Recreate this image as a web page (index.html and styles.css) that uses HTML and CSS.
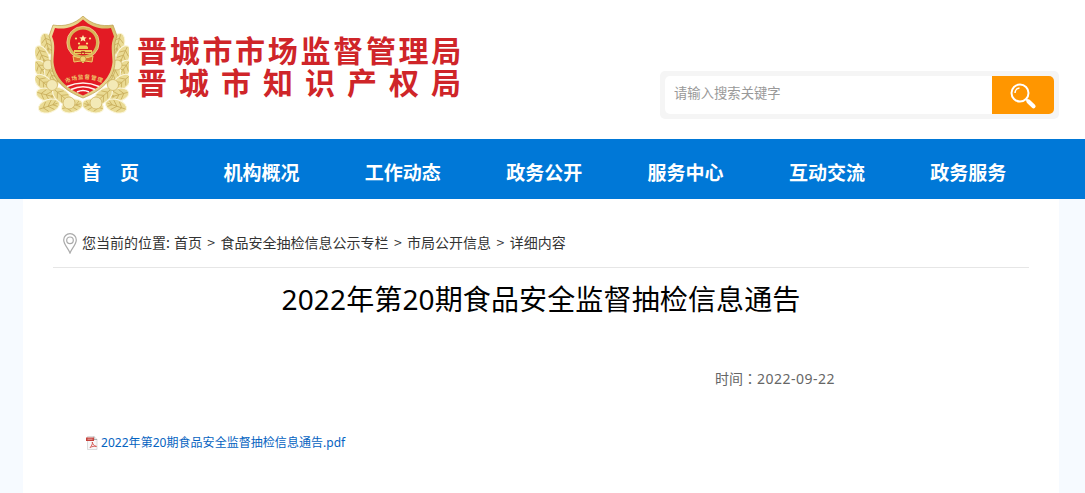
FILE: index.html
```html
<!DOCTYPE html>
<html lang="zh-CN">
<head>
    <meta charset="UTF-8">
    <meta name="viewport" content="width=device-width, initial-scale=1.0">
    <title>2022年第20期食品安全监督抽检信息通告</title>
    <link rel="stylesheet" href="styles.css">
</head>
<body>
    <header class="header">
        <a class="logo" href="#">
            <svg class="emblem" viewBox="0 0 94 100" width="94" height="100">
                <defs>
                    <linearGradient id="gold" x1="0" y1="0" x2="1" y2="1">
                        <stop offset="0" stop-color="#f3e6a6"/>
                        <stop offset=".5" stop-color="#d8bc6a"/>
                        <stop offset="1" stop-color="#efe0a0"/>
                    </linearGradient>
                    <g id="leaf">
                        <ellipse rx="11" ry="6.5" fill="#eadb94" stroke="#fbf6dc" stroke-width="1"/>
                        <path d="M-10 0H9M-6 0L-2-5M-6 0L-2 5M-1 0L4-5M-1 0L4 5M4 0L8-3M4 0L8 3" fill="none" stroke="#c9ae5c" stroke-width=".8"/>
                    </g>
                    <g id="wreath">
                        <use href="#leaf" transform="translate(12 28) rotate(75)"/>
                        <use href="#leaf" transform="translate(7 40) rotate(65)"/>
                        <use href="#leaf" transform="translate(7 54) rotate(55)"/>
                        <use href="#leaf" transform="translate(17 60) rotate(65)"/>
                        <use href="#leaf" transform="translate(9 67) rotate(40)"/>
                        <use href="#leaf" transform="translate(12 79) rotate(15)"/>
                        <use href="#leaf" transform="translate(14 90) rotate(-18)"/>
                        <use href="#leaf" transform="translate(27 80) rotate(40)"/>
                        <use href="#leaf" transform="translate(37 90) rotate(-15)"/>
                        <g fill="#f3e9b6" stroke="#cfb462" stroke-width=".8">
                            <circle cx="13" cy="49" r="5"/>
                            <circle cx="17" cy="69" r="5.5"/>
                            <circle cx="34" cy="87" r="6"/>
                        </g>
                    </g>
                </defs>
                <use href="#wreath"/>
                <use href="#wreath" transform="translate(95 0) scale(-1 1)"/>
                <path d="M48 0C40 8 29 11 18 9L14 20C18 29 16 36 16 46C17 64 30 75 48 82C66 75 79 64 80 46C80 36 78 29 82 20L78 9C67 11 56 8 48 0Z" fill="url(#gold)" stroke="#bc9d4b" stroke-width=".7"/>
                <path d="M48 3.500C40 11 30 14 20 12L17 20.500C21 29 18.500 37 18.500 46C20 62 31 72 48 79.500C65 72 76 62 77.500 46C77.500 37 75 29 79 20.500L76 12C66 14 56 11 48 3.500Z" fill="#e31b24"/>
                <circle cx="48" cy="26.500" r="14.500" fill="#df1b22" stroke="#d8b557" stroke-width="3"/>
                <circle cx="48" cy="26.500" r="16.200" fill="none" stroke="#f7e8a4" stroke-width=".7"/>
                <path d="M48 19L49.100 21.200L51.700 21.400L49.800 23L50.400 25.500L48 24.200L45.600 25.500L46.200 23L44.300 21.400L46.900 21.200Z" fill="#fff0b0"/>
                <g fill="#ffe57c">
                    <circle cx="41" cy="22.500" r="1.100"/><circle cx="55" cy="22.500" r="1.100"/>
                    <circle cx="44" cy="27.500" r="1.100"/><circle cx="52" cy="27.500" r="1.100"/>
                </g>
                <path d="M43 31L44.500 29.500H51.500L53 31V33H43ZM39 34H57V38H39Z" fill="#efc95c"/>
                <path d="M40 36.500H56M46.500 38V35.500H49.500V38" fill="none" stroke="#b72a1c" stroke-width=".8"/>
                <path d="M38 40Q48 44 58 40L57 46L50 45L48 47L46 45L39 46Z" fill="#dd6a2b" stroke="#efcd68" stroke-width="1"/>
                <circle cx="48" cy="43" r="3" fill="#efd170" stroke="#b6832f" stroke-width=".6"/>
                <path id="badge-arc" d="M31 67Q49 59 68 67" fill="none"/>
                <path d="M32 70.500Q48 63.500 64 70.500M36 73.500Q48 68 60 73.500M42 76Q48 73 54 76" fill="none" stroke="#fff3ed" stroke-width="1.700"/>
                <text class="badge-text"><textPath href="#badge-arc">市场监督管理</textPath></text>
            </svg>
            <div class="site-name">
                <div class="name-top">晋城市市场监督管理局</div>
                <div class="name-bottom">晋城市知识产权局</div>
            </div>
        </a>
        <form class="search">
            <input class="search-input" type="text" placeholder="请输入搜索关键字">
            <button class="search-btn" type="button" aria-label="搜索">
                <svg width="28" height="28" viewBox="0 0 28 28" fill="none" stroke="#fff">
                    <circle cx="11" cy="11" r="8.500" stroke-width="2"/>
                    <path d="M6 11A5 5 0 0 1 10.500 6" stroke-width="1.500"/>
                    <path d="M17 17L19.500 19.500" stroke-width="2"/>
                    <path d="M19.500 19.500L24.500 24.300" stroke-width="4.200" stroke-linecap="round"/>
                </svg>
            </button>
        </form>
    </header>

    <nav class="nav">
        <ul class="nav-list">
            <li>首　页</li>
            <li>机构概况</li>
            <li>工作动态</li>
            <li>政务公开</li>
            <li>服务中心</li>
            <li>互动交流</li>
            <li>政务服务</li>
        </ul>
    </nav>

    <main class="content">
        <div class="crumbs">
            <svg class="pin" width="14" height="21" viewBox="0 0 14 21" fill="none" stroke="#aaa">
                <path d="M7 20C5.500 15.500 .7 11.500 .7 7A6.300 6.300 0 0 1 13.300 7C13.300 11.500 8.500 15.500 7 20Z" stroke-width="1.200"/>
                <circle cx="7" cy="7.300" r="3.300" stroke-width="1.200"/>
            </svg>
            <span class="crumb-label">您当前的位置:</span>
            <a href="#">首页</a><i>&gt;</i><a href="#">食品安全抽检信息公示专栏</a><i>&gt;</i><a href="#">市局公开信息</a><i>&gt;</i><span>详细内容</span>
        </div>
        <h1 class="title">2022年第20期食品安全监督抽检信息通告</h1>
        <p class="date">时间<span class="colon" lang="zh-TW">：</span><span class="date-num">2022-09-22</span></p>
        <div class="attach">
            <svg width="13" height="14" viewBox="0 0 13 14">
                <path d="M2.500 .5H9L12 3.500V13.500H2.500Z" fill="#f7f7f7" stroke="#d4d4d4" stroke-width=".8"/>
                <path d="M9 .5V3.500H12" fill="none" stroke="#999" stroke-width=".8"/>
                <path d="M1 1.500H9V5H1Z" fill="#c5423d"/>
                <path d="M2.500 3.200H7.500" stroke="#eeb5b0" stroke-width=".9"/>
                <path d="M5 11.500C6.500 10.500 7.800 7.500 7.300 6C7.800 8.500 9 10.200 11.500 10.400C9 10 7 10.500 5 11.500Z" fill="none" stroke="#d2514c" stroke-width=".9"/>
            </svg>
            <a href="#">2022年第20期食品安全监督抽检信息通告.pdf</a>
        </div>
    </main>
</body>
</html>
```
FILE: styles.css
```css
* {
    box-sizing: border-box;
    margin: 0;
    padding: 0;
}
body {
    font-family: "Noto Sans", "Noto Sans CJK SC", sans-serif;
    font-size: 14px;
    color: #333;
    background: #f6faff;
    overflow: hidden;
}
a {
    color: inherit;
    text-decoration: none;
}
.header {
    display: flex;
    justify-content: space-between;
    height: 139px;
    padding: 16px 26px 0 35px;
    background: #fff;
}
.logo {
    display: flex;
    align-items: flex-start;
}
.emblem {
    flex: none;
}
.badge-text {
    font-family: "Noto Sans CJK SC", sans-serif;
    font-size: 5.500px;
    font-weight: bold;
    letter-spacing: .8px;
    fill: #efc56b;
}
.site-name {
    padding: 17px 0 0 8px;
    font-family: "Noto Sans CJK SC", sans-serif;
    font-size: 30px;
    font-weight: bold;
    line-height: 32px;
    color: #cf2529;
    white-space: nowrap;
}
.name-top {
    letter-spacing: 2.700px;
}
.name-bottom {
    letter-spacing: 12px;
}
.search {
    display: flex;
    width: 399px;
    height: 48px;
    margin-top: 55px;
    padding: 5px;
    background: #f5f5f5;
    border-radius: 5px;
}
.search-input {
    flex: 1;
    min-width: 0;
    height: 38px;
    padding: 0 9px 5px;
    border: none;
    border-radius: 5px 0 0 5px;
    font-family: "Noto Sans CJK SC", sans-serif;
    font-size: 13.330px;
    background: #fff;
}
.search-input::placeholder {
    color: #999;
}
.search-btn {
    width: 62px;
    height: 38px;
    padding: 4px 0 0;
    border: none;
    border-radius: 0 5px 5px 0;
    background: #ff9600;
}
.nav {
    height: 60px;
    padding-left: 82px;
    background: #0078d7;
}
.nav-list {
    display: grid;
    grid-template-columns: repeat(7, 141.400px);
    list-style: none;
    font-family: "Noto Sans CJK SC", sans-serif;
    font-size: 19px;
    font-weight: bold;
    line-height: 65px;
    color: #fff;
}
.content {
    width: 1036px;
    height: 294px;
    margin-left: 23px;
    padding: 20px 30px 0;
    background: #fff;
}
.crumbs {
    display: flex;
    align-items: center;
    height: 49px;
    padding: 0 0 2px 10px;
    border-bottom: 1px solid #e6e6e6;
    font-family: "Noto Sans CJK SC", sans-serif;
}
.pin {
    margin: 2px 5px 0 0;
}
.crumb-label {
    margin-right: 4px;
}
.crumbs i {
    width: 18.600px;
    font-style: normal;
    text-align: center;
}
.title {
    font-size: 28px;
    font-weight: normal;
    letter-spacing: .13px;
    line-height: 40px;
    margin-top: 11px;
    text-align: center;
    color: #000;
}
.date {
    margin-top: 49px;
    padding-left: 662px;
    line-height: 20px;
    color: #666;
}
.colon {
    font-family: "Noto Sans CJK TC", sans-serif;
}
.date-num {
    letter-spacing: .5px;
}
.attach {
    display: flex;
    align-items: center;
    margin-top: 44px;
    padding-left: 32px;
    gap: 3px;
    line-height: 20px;
    font-size: 12px;
    letter-spacing: .04px;
    color: #0563c1;
}
```
